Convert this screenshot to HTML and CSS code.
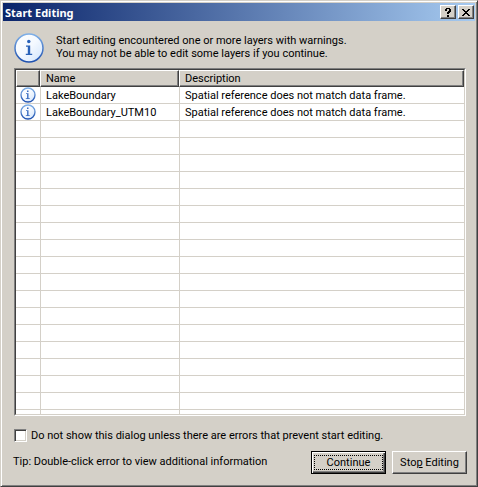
FILE: index.html
```html
<!DOCTYPE html>
<html lang="en">
<head>
  <meta charset="UTF-8" />
  <meta name="viewport" content="width=device-width, initial-scale=1.0" />
  <title>Start Editing</title>
  <link rel="stylesheet" href="styles.css">
</head>
<body>

  <!-- Info icon, shared by the message and the table rows -->
  <svg class="defs" width="0" height="0" aria-hidden="true">
    <defs>
      <linearGradient id="ring" x1="0" y1="0" x2="0" y2="1">
        <stop offset="0" stop-color="#7fb0e8" />
        <stop offset="1" stop-color="#1d4fae" />
      </linearGradient>
      <linearGradient id="face" x1="0" y1="0" x2="1" y2="1">
        <stop offset="0" stop-color="#ffffff" />
        <stop offset="0.5" stop-color="#f4f9ff" />
        <stop offset="1" stop-color="#cfe3fc" />
      </linearGradient>
    </defs>
    <symbol id="info" viewBox="0 0 30 30">
      <circle cx="15" cy="15" r="14" fill="url(#face)" stroke="url(#ring)" stroke-width="1.5" />
      <circle cx="14.8" cy="8.5" r="1.7" fill="#2a62b8" />
      <path d="M12 12.5h4.2v8.3h2v1.2h-6.4v-1.2h2v-7.1h-1.8z" fill="#2a62b8" />
    </symbol>
    <symbol id="info-small" viewBox="0 0 16 16">
      <circle cx="8" cy="8" r="7" fill="url(#face)" stroke="url(#ring)" stroke-width="1.3" />
      <path d="M7 3.5h1.5v1.5H7zM6 6.2h2.5v5h1.3v.8H5.8v-.8h1.3V7H6z" fill="#3a6cc0" />
    </symbol>
  </svg>

  <div class="window">
    <header class="titlebar">
      <h1>Start Editing</h1>
      <button class="caption" type="button" aria-label="Help">
        <svg width="8" height="9" viewBox="0 0 8 9" shape-rendering="crispEdges"><path d="M2 0h4v1h1v3H6v1H5v1H3V4h1V3h1V1H3v2H1V1h1zM3 7h2v2H3z" /></svg>
      </button>
      <button class="caption" type="button" aria-label="Close">
        <svg width="8" height="7" viewBox="0 0 8 7" shape-rendering="crispEdges"><path d="M0 0h2v1h1v1h2V1h1V0h2v1H7v1H6v1H5v1h1v1h1v1h1v1H6V6H5V5H3v1H2v1H0V6h1V5h1V4h1V3H2V2H1V1H0z" /></svg>
      </button>
    </header>

    <main>
      <section class="message">
        <svg width="30" height="30"><use href="#info" /></svg>
        <p>Start editing encountered one or more layers with warnings.<br>You may not be able to edit some layers if you continue.</p>
      </section>

      <div class="list">
        <div class="grid">
          <table>
            <thead>
              <tr><th class="icon" aria-label="Type"></th><th class="name">Name</th><th>Description</th></tr>
            </thead>
            <tbody>
              <tr><td><svg width="16" height="16"><use href="#info-small" /></svg></td><td>LakeBoundary</td><td>Spatial reference does not match data frame.</td></tr>
              <tr><td><svg width="16" height="16"><use href="#info-small" /></svg></td><td>LakeBoundary_UTM10</td><td>Spatial reference does not match data frame.</td></tr>
              <tr><td></td><td></td><td></td></tr>
              <tr><td></td><td></td><td></td></tr>
              <tr><td></td><td></td><td></td></tr>
              <tr><td></td><td></td><td></td></tr>
              <tr><td></td><td></td><td></td></tr>
              <tr><td></td><td></td><td></td></tr>
              <tr><td></td><td></td><td></td></tr>
              <tr><td></td><td></td><td></td></tr>
              <tr><td></td><td></td><td></td></tr>
              <tr><td></td><td></td><td></td></tr>
              <tr><td></td><td></td><td></td></tr>
              <tr><td></td><td></td><td></td></tr>
              <tr><td></td><td></td><td></td></tr>
              <tr><td></td><td></td><td></td></tr>
              <tr><td></td><td></td><td></td></tr>
              <tr><td></td><td></td><td></td></tr>
              <tr><td></td><td></td><td></td></tr>
              <tr><td></td><td></td><td></td></tr>
            </tbody>
          </table>
        </div>
      </div>

      <div class="option">
        <input type="checkbox" id="errors-only">
        <label for="errors-only">Do not show this dialog unless there are errors that prevent start editing.</label>
      </div>

      <footer>
        <p>Tip: Double-click error to view additional information</p>
        <button class="button default" type="button"><span>Continue</span></button>
        <button class="button" type="button"><span>Sto<u>p</u> Editing</span></button>
      </footer>
    </main>
  </div>

</body>
</html>
```
FILE: styles.css
```css
* {
  box-sizing: border-box;
}

body {
  margin: 0;
  background-color: #d4d0c8;
  color: #000;
  font: 11px/13px Tahoma, Roboto, sans-serif;
}

p, h1 {
  margin: 0;
}

button {
  padding: 0;
  background-color: #d4d0c8;
  color: #000;
  font: inherit;
}

.defs {
  position: absolute;
}

.window {
  display: flex;
  flex-direction: column;
  height: 100vh;
  padding: 2px 1px 1px 2px;
  border: 1px solid;
  border-color: #d4d0c8 #404040 #404040 #d4d0c8;
  box-shadow: inset 1px 1px #fff, inset -1px -1px #808080;
}

/* Title bar */
.titlebar {
  display: flex;
  align-items: center;
  height: 18px;
  margin-right: 1px;
  padding: 0 1px 0 2px;
  background: linear-gradient(to right, #0a246a, #a6caf0);
}

.titlebar h1 {
  flex: 1;
  color: #fff;
  font: bold 11px/13px Tahoma, "Noto Sans", sans-serif;
}

.caption {
  display: flex;
  align-items: center;
  justify-content: center;
  width: 16px;
  height: 14px;
  border: 1px solid;
  border-color: #fff #404040 #404040 #fff;
  box-shadow: inset -1px -1px #808080;
}

.caption + .caption {
  margin-left: 2px;
}

main {
  display: flex;
  flex: 1;
  flex-direction: column;
  min-height: 0;
  padding: 12px 9px 11px 10px;
}

.message {
  display: flex;
  gap: 12px;
  margin-bottom: 5px;
  padding-left: 1px;
}

.message p {
  padding-top: 1px;
}

/* Layer list */
.list {
  display: flex;
  flex: 1;
  min-height: 0;
  margin: 0 1px;
  border: 1px solid;
  border-color: #808080 #fff #fff #808080;
}

.grid {
  flex: 1;
  overflow: hidden;
  border: 1px solid;
  border-color: #404040 #d4d0c8 #d4d0c8 #404040;
  background-color: #fff;
}

table {
  width: 100%;
  border-spacing: 0;
  table-layout: fixed;
}

th {
  height: 17px;
  padding: 0 5px;
  border: 1px solid;
  border-color: #fff #404040 #404040 #fff;
  box-shadow: inset -1px -1px #808080;
  background-color: #d4d0c8;
  font-weight: normal;
  text-align: left;
}

.icon {
  width: 24px;
}

.name {
  width: 139px;
}

td {
  height: 17px;
  padding: 0 5px;
  border-bottom: 1px solid #d4d0c8;
  border-left: 1px solid #d4d0c8;
}

td:first-child {
  padding: 0 4px;
  border-left: 0;
}

td svg {
  display: block;
}

/* Bottom controls */
.option {
  display: flex;
  align-items: center;
  gap: 4px;
  margin: 13px 1px 9px;
}

.option input {
  width: 13px;
  height: 13px;
  margin: 0;
  appearance: none;
  border: 1px solid;
  border-color: #808080 #fff #fff #808080;
  box-shadow: inset 1px 1px #404040, inset -1px -1px #d4d0c8;
  background-color: #fff;
}

.option input:checked {
  background-color: #404040;
}

footer {
  display: flex;
  gap: 6px;
}

footer p {
  flex: 1;
  padding-top: 4px;
}

.button {
  width: 75px;
  height: 23px;
  border: 1px solid;
  border-color: #fff #404040 #404040 #fff;
  box-shadow: inset -1px -1px #808080;
}

.default {
  padding: 2px;
  border-color: #000;
  box-shadow: inset 1px 1px #fff, inset -1px -1px #404040, inset -2px -2px #808080;
}

.default span {
  display: block;
  border: 1px dotted #000;
}
```
